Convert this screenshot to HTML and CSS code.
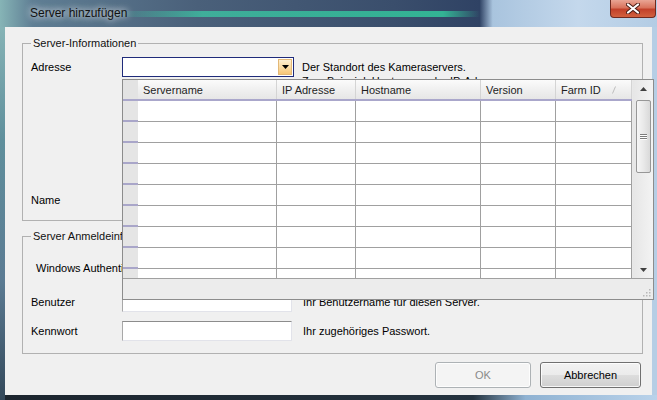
FILE: index.html
```html
<!DOCTYPE html>
<html lang="de">
  <head>
    <meta charset="UTF-8" />
    <title>Server hinzufügen</title>
    <link rel="stylesheet" href="styles.css">
  </head>
  <body>
    <div class="window">
      <div class="titlebar">
        <span class="title">Server hinzufügen</span>
        <button class="close-btn" type="button">
          <svg width="14" height="11" viewBox="0 0 14 11">
            <path d="M2 1.5 L12 9.5 M12 1.5 L2 9.5" stroke="#4a1c14" stroke-width="4" stroke-linecap="round" />
            <path d="M2 1.5 L12 9.5 M12 1.5 L2 9.5" stroke="#fff" stroke-width="2.2" stroke-linecap="round" />
          </svg>
        </button>
      </div>

      <div class="client">
        <fieldset class="group group-info">
          <legend>Server-Informationen</legend>
          <div class="field-row row-address">
            <label class="field-label">Adresse</label>
            <div class="combo">
              <input type="text" class="combo-input" />
              <span class="combo-btn">
                <svg width="7" height="4" viewBox="0 0 7 4"><polygon points="0,0 7,0 3.5,4" fill="#000" /></svg>
              </span>
            </div>
            <p class="hint hint-multi">Der Standort des Kameraservers.<br />Zum Beispiel: Hostname oder IP-Adresse.</p>
          </div>
          <div class="field-row row-name">
            <label class="field-label">Name</label>
            <input type="text" class="textbox" />
            <p class="hint">Ein Anzeigename für diesen Server.</p>
          </div>
        </fieldset>

        <fieldset class="group group-login">
          <legend>Server Anmeldeinformationen</legend>
          <div class="field-row row-windows">
            <label class="check-label">Windows Authentifizierung verwenden</label>
          </div>
          <div class="field-row row-user">
            <label class="field-label">Benutzer</label>
            <input type="text" class="textbox" />
            <p class="hint">Ihr Benutzername für diesen Server.</p>
          </div>
          <div class="field-row row-pass">
            <label class="field-label">Kennwort</label>
            <input type="password" class="textbox" />
            <p class="hint">Ihr zugehöriges Passwort.</p>
          </div>
        </fieldset>

        <div class="buttons">
          <button class="btn btn-ok" type="button" disabled>OK</button>
          <button class="btn btn-cancel" type="button">Abbrechen</button>
        </div>

        <!-- Auswahlliste der Combobox -->
        <div class="dropdown">
          <div class="dd-body">
            <div class="dd-grid">
              <div class="dd-head">
                <div class="hcell sel"></div>
                <div class="hcell">Servername</div>
                <div class="hcell">IP Adresse</div>
                <div class="hcell">Hostname</div>
                <div class="hcell">Version</div>
                <div class="hcell">Farm ID
                  <svg class="sort-mark" width="4" height="8" viewBox="0 0 4 8"><path d="M0.5 7.5 L3.5 0.5" stroke="#bdbdbd" stroke-width="1" /></svg>
                </div>
              </div>
              <div class="dd-row"><div class="cell sel"></div><div class="cell"></div><div class="cell"></div><div class="cell"></div><div class="cell"></div><div class="cell"></div></div>
              <div class="dd-row"><div class="cell sel"></div><div class="cell"></div><div class="cell"></div><div class="cell"></div><div class="cell"></div><div class="cell"></div></div>
              <div class="dd-row"><div class="cell sel"></div><div class="cell"></div><div class="cell"></div><div class="cell"></div><div class="cell"></div><div class="cell"></div></div>
              <div class="dd-row"><div class="cell sel"></div><div class="cell"></div><div class="cell"></div><div class="cell"></div><div class="cell"></div><div class="cell"></div></div>
              <div class="dd-row"><div class="cell sel"></div><div class="cell"></div><div class="cell"></div><div class="cell"></div><div class="cell"></div><div class="cell"></div></div>
              <div class="dd-row"><div class="cell sel"></div><div class="cell"></div><div class="cell"></div><div class="cell"></div><div class="cell"></div><div class="cell"></div></div>
              <div class="dd-row"><div class="cell sel"></div><div class="cell"></div><div class="cell"></div><div class="cell"></div><div class="cell"></div><div class="cell"></div></div>
              <div class="dd-row"><div class="cell sel"></div><div class="cell"></div><div class="cell"></div><div class="cell"></div><div class="cell"></div><div class="cell"></div></div>
              <div class="dd-row"><div class="cell sel"></div><div class="cell"></div><div class="cell"></div><div class="cell"></div><div class="cell"></div><div class="cell"></div></div>
            </div>
            <div class="dd-scroll">
              <div class="sb-arrow">
                <svg width="7" height="4" viewBox="0 0 7 4"><polygon points="0,4 3.5,0 7,4" fill="#404040" /></svg>
              </div>
              <div class="sb-thumb">
                <span class="grip"></span><span class="grip"></span><span class="grip"></span>
              </div>
              <div class="sb-track"></div>
              <div class="sb-arrow">
                <svg width="7" height="4" viewBox="0 0 7 4"><polygon points="0,0 7,0 3.5,4" fill="#404040" /></svg>
              </div>
            </div>
          </div>
          <div class="dd-status">
            <svg class="size-grip" width="8" height="8" viewBox="0 0 8 8">
              <rect x="6" y="0" width="1.5" height="1.5" fill="#b8b8b8" />
              <rect x="3" y="3" width="1.5" height="1.5" fill="#b8b8b8" />
              <rect x="6" y="3" width="1.5" height="1.5" fill="#b8b8b8" />
              <rect x="0" y="6" width="1.5" height="1.5" fill="#b8b8b8" />
              <rect x="3" y="6" width="1.5" height="1.5" fill="#b8b8b8" />
              <rect x="6" y="6" width="1.5" height="1.5" fill="#b8b8b8" />
            </svg>
          </div>
        </div>
      </div>
    </div>
  </body>
</html>
```

FILE: styles.css
```css
* {
  margin: 0;
  padding: 0;
  box-sizing: border-box;
}

body {
  width: 657px;
  height: 400px;
  overflow: hidden;
  font-family: "Liberation Sans", Arial, sans-serif;
  font-size: 11px;
  color: #000;
}

/* Fensterrahmen (Aero) */
.window {
  width: 657px;
  height: 400px;
  display: flex;
  flex-direction: column;
  background:
    linear-gradient(180deg, #8fbcbc 0, #5f8f9c 35%, #5b7b93 70%, #33485a 100%) left top / 5px 100% no-repeat,
    linear-gradient(90deg, #1c252e 0, #25333f 72%, #8fb2d2 80%, #b9d2ea 100%) left bottom / 100% 5px no-repeat,
    #b6cee5;
}

.titlebar {
  height: 27px;
  display: flex;
  align-items: flex-start;
  background:
    linear-gradient(90deg, rgba(60, 200, 165, 0) 0, rgba(60, 200, 165, 0.75) 25%, #33b394 90%, rgba(60, 200, 165, 0) 100%) 110px 11px / 370px 6px no-repeat,
    linear-gradient(90deg, #86b4b6 0, #5f7e94 5%, #4a607a 30%, #3a4e6c 60%, #2f4264 73%, #a9c4de 75%, #c4d8ec 88%, #b3cce4 100%);
}

.title {
  margin: 6px 0 0 30px;
  font-size: 12px;
  line-height: 15px;
  color: #111;
  text-shadow: 0 0 6px rgba(255, 255, 255, 0.9), 0 0 10px rgba(255, 255, 255, 0.6);
}

.close-btn {
  margin-left: auto;
  margin-right: 1px;
  width: 46px;
  height: 18px;
  border: 1px solid #6e2a20;
  border-top: none;
  border-radius: 0 0 4px 4px;
  background: linear-gradient(180deg, #e9a594 0, #d9735c 45%, #c2412a 55%, #d2613f 100%);
  display: flex;
  justify-content: center;
  align-items: center;
}

/* Client-Bereich */
.client {
  position: relative;
  margin: 0 5px;
  height: 368px;
  background: #f0f0f0;
}

.group {
  margin: 10px 9px 0 17px;
  border: 1px solid #b1b1b1;
  padding: 0 8px 10px 8px;
}

.group legend {
  padding: 0 2px;
  line-height: 13px;
  color: #111;
}

.group-login {
  margin-top: 9px;
  padding-bottom: 12px;
}

.field-row {
  display: flex;
  align-items: flex-start;
}

.field-label {
  width: 91px;
  line-height: 20px;
}

.row-address {
  margin-top: 7px;
}

.row-name {
  margin-top: 102px;
}

.row-windows {
  margin-top: 15px;
}

.row-user {
  margin-top: 14px;
}

.row-pass {
  margin-top: 9px;
}

.check-label {
  padding-left: 5px;
  line-height: 20px;
}

.combo {
  width: 172px;
  height: 20px;
  border: 1px solid #1f2b7a;
  background: #fff;
  display: flex;
}

.combo-input {
  flex: 1;
  min-width: 0;
  border: none;
  outline: none;
}

.combo-btn {
  width: 14px;
  margin: 1px;
  border: 1px solid #e3b877;
  background: linear-gradient(180deg, #fdefd2 0, #fbdca4 50%, #f6c676 100%);
  display: flex;
  justify-content: center;
  align-items: center;
}

.textbox {
  width: 170px;
  height: 20px;
  border: 1px solid #e2e3ea;
  border-top-color: #8c8c8c;
  border-left-color: #a8a8a8;
  background: #fff;
  outline: none;
}

.hint {
  margin-left: 11px;
  line-height: 20px;
}

.hint-multi {
  margin-left: 8px;
  padding-top: 3px;
  line-height: 14px;
}

.buttons {
  display: flex;
  justify-content: flex-end;
  gap: 9px;
  margin-top: 8px;
  padding-right: 11px;
}

.btn {
  height: 26px;
  border: 1px solid #707070;
  border-radius: 3px;
  font-family: inherit;
  font-size: 11px;
  background: linear-gradient(180deg, #f2f2f2 0, #ebebeb 48%, #dddddd 52%, #cfcfcf 100%);
  box-shadow: inset 0 0 0 1px rgba(255, 255, 255, 0.8);
  color: #000;
}

.btn-ok {
  width: 96px;
  border-color: #adb2b5;
  background: #f4f4f4;
  color: #8a8a8a;
}

.btn-cancel {
  width: 101px;
}

/* Auswahlliste */
.dropdown {
  position: absolute;
  left: 117px;
  top: 52px;
  width: 532px;
  height: 221px;
  border: 1px solid #8c8c8c;
  background: #f0f0f0;
  z-index: 10;
}

.dd-body {
  display: flex;
  height: 198px;
}

.dd-grid {
  width: 509px;
  height: 198px;
  overflow: hidden;
  background: #fff;
}

.dd-head,
.dd-row {
  display: grid;
  grid-template-columns: 15px 139px 79px 125px 75px 76px;
}

.dd-head {
  height: 21px;
  border-bottom: 2px solid #aaa7cb;
}

.hcell {
  display: flex;
  align-items: center;
  padding-left: 5px;
  background: linear-gradient(180deg, #fbfbfb 0, #f0f0f0 50%, #e6e6e6 100%);
  border-right: 1px solid #d4d4d4;
  color: #1e1e1e;
  white-space: nowrap;
}

.hcell.sel {
  background: #e3e3e3;
  border-right: none;
}

.sort-mark {
  margin-left: 11px;
}

.dd-row {
  height: 21px;
}

.cell {
  border-right: 1px solid #a0a0a0;
  border-bottom: 1px solid #a0a0a0;
}

.cell.sel {
  border-right: none;
  background: #e5e5e5;
  border-bottom: 2px solid #a9a6c9;
}

.dd-scroll {
  width: 21px;
  display: flex;
  flex-direction: column;
  align-items: center;
  background: linear-gradient(90deg, #e6e6e6 0, #f3f3f3 100%);
  border-left: 1px solid #e8e8e8;
}

.sb-arrow {
  height: 17px;
  width: 100%;
  display: flex;
  justify-content: center;
  align-items: center;
}

.sb-thumb {
  margin-top: 3px;
  width: 15px;
  height: 73px;
  border: 1px solid #979797;
  border-radius: 2px;
  background: linear-gradient(90deg, #f6f6f6 0, #e9e9e9 50%, #d9d9d9 100%);
  display: flex;
  flex-direction: column;
  justify-content: center;
  align-items: center;
  gap: 1px;
}

.grip {
  width: 7px;
  height: 1px;
  background: #7d7d7d;
  box-shadow: 0 1px 0 #fff;
}

.sb-track {
  flex: 1;
}

.dd-status {
  height: 21px;
  border-top: 1px solid #a0a0a0;
  background: #ececec;
  display: flex;
  justify-content: flex-end;
  align-items: flex-end;
  padding: 0 2px 2px 0;
}
```
